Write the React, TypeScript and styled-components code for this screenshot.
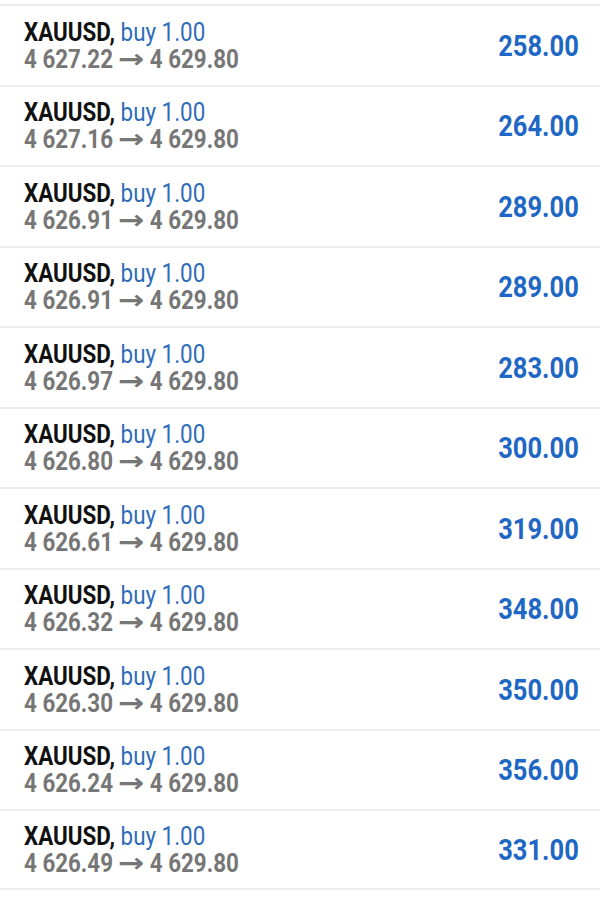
import React from "react";
import styled, { createGlobalStyle } from "styled-components";

interface Trade {
  open: string;
  profit: string;
}

const trades: Trade[] = [
  { open: "4 627.22", profit: "258.00" },
  { open: "4 627.16", profit: "264.00" },
  { open: "4 626.91", profit: "289.00" },
  { open: "4 626.91", profit: "289.00" },
  { open: "4 626.97", profit: "283.00" },
  { open: "4 626.80", profit: "300.00" },
  { open: "4 626.61", profit: "319.00" },
  { open: "4 626.32", profit: "348.00" },
  { open: "4 626.30", profit: "350.00" },
  { open: "4 626.24", profit: "356.00" },
  { open: "4 626.49", profit: "331.00" },
];

export default function App() {
  return (
    <>
      <GlobalStyle />
      <TradeList>
        {trades.map((t, i) => (
          <TradeRow key={i}>
            <Info>
              <TitleLine>
                <Symbol>XAUUSD,</Symbol> <Side>buy 1.00</Side>
              </TitleLine>
              <Prices>
                {t.open} <Arrow>→</Arrow> 4 629.80
              </Prices>
            </Info>
            <Profit>{t.profit}</Profit>
          </TradeRow>
        ))}
      </TradeList>
    </>
  );
}

const GlobalStyle = createGlobalStyle`
  body {
    margin: 0;
    background: #ffffff;
    font-family: Roboto, "Liberation Sans", sans-serif;
  }
`;

const TradeList = styled.div`
  padding-top: 4px;
  background: #ffffff;
`;

const TradeRow = styled.div`
  box-sizing: border-box;
  height: 80.5px;
  display: flex;
  align-items: center;
  justify-content: space-between;
  padding: 0 21px 0 24px;
  border-top: 2px solid #ececec;
  &:last-child {
    border-bottom: 2px solid #ececec;
  }
`;

const Info = styled.div`
  display: flex;
  flex-direction: column;
  transform: scaleX(0.86);
  transform-origin: left center;
  margin-top: 1px;
`;

const TitleLine = styled.div`
  font-size: 26px;
  line-height: 27px;
  white-space: nowrap;
`;

const Symbol = styled.span`
  font-weight: 700;
  color: #111111;
`;

const Side = styled.span`
  font-weight: 400;
  color: #2f6db8;
`;

const Prices = styled.div`
  font-size: 26px;
  line-height: 27px;
  font-weight: 700;
  color: #767676;
  white-space: nowrap;
`;

const Arrow = styled.span`
  display: inline-block;
  margin: 0 4px;
  font-family: "DejaVu Sans", sans-serif;
  font-weight: 700;
  transform: scaleX(1.4);
`;

const Profit = styled.div`
  font-size: 30px;
  font-weight: 700;
  color: #1f67c4;
  transform: scaleX(0.85);
  transform-origin: right center;
  white-space: nowrap;
`;
